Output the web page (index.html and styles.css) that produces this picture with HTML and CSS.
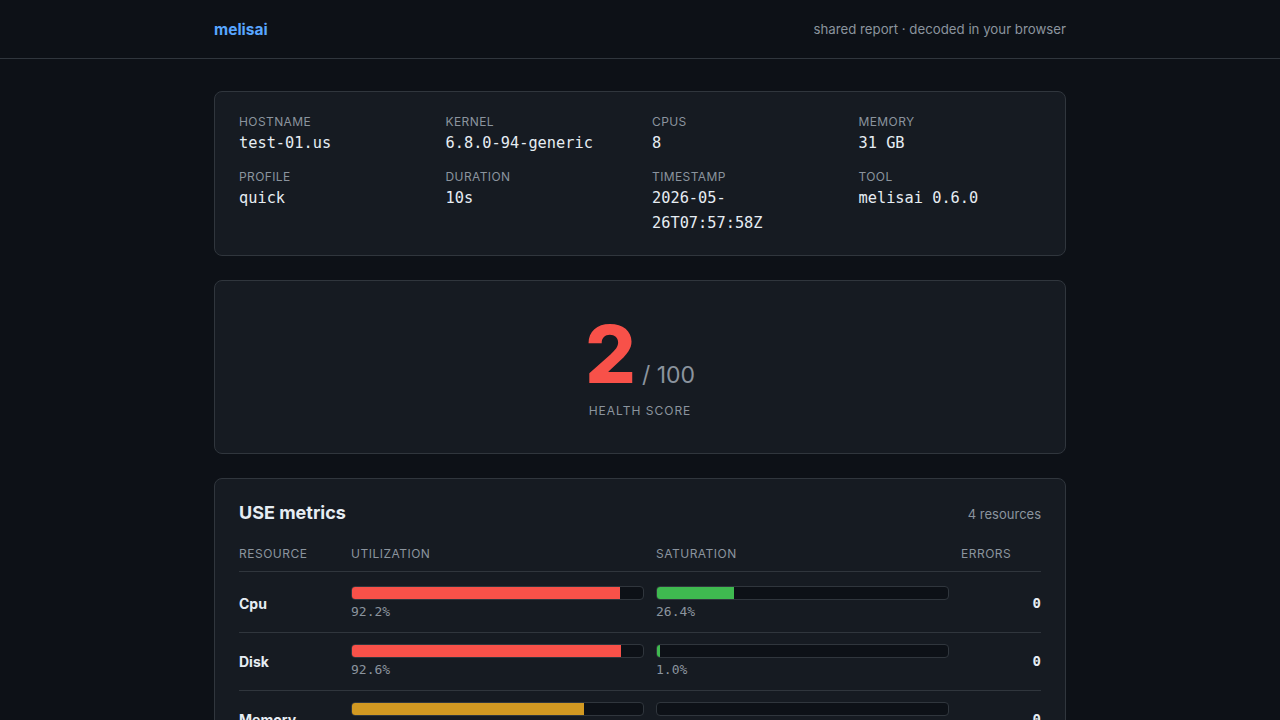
FILE: index.html
```html
<!DOCTYPE html>
<html lang="en">
<head>
    <meta charset="UTF-8">
    <meta name="viewport" content="width=device-width, initial-scale=1.0">
    <title>melisai - shared report</title>
    <link rel="stylesheet" href="styles.css">
</head>
<body>
    <header class="topbar">
        <div class="wrap topbar-inner">
            <span class="brand">melisai</span>
            <span class="topbar-note">shared report · decoded in your browser</span>
        </div>
    </header>

    <main class="wrap content">
        <section class="card meta">
            <div class="meta-item">
                <div class="meta-label">Hostname</div>
                <div class="meta-value">test-01.us</div>
            </div>
            <div class="meta-item">
                <div class="meta-label">Kernel</div>
                <div class="meta-value">6.8.0-94-generic</div>
            </div>
            <div class="meta-item">
                <div class="meta-label">CPUs</div>
                <div class="meta-value">8</div>
            </div>
            <div class="meta-item">
                <div class="meta-label">Memory</div>
                <div class="meta-value">31 GB</div>
            </div>
            <div class="meta-item">
                <div class="meta-label">Profile</div>
                <div class="meta-value">quick</div>
            </div>
            <div class="meta-item">
                <div class="meta-label">Duration</div>
                <div class="meta-value">10s</div>
            </div>
            <div class="meta-item">
                <div class="meta-label">Timestamp</div>
                <div class="meta-value">2026-05-26T07:57:58Z</div>
            </div>
            <div class="meta-item">
                <div class="meta-label">Tool</div>
                <div class="meta-value">melisai 0.6.0</div>
            </div>
        </section>

        <section class="card score">
            <div class="score-line">
                <span class="score-num bad">2</span>
                <span class="score-max">/ 100</span>
            </div>
            <div class="score-label">Health score</div>
        </section>

        <section class="card use">
            <div class="card-head">
                <h2>USE metrics</h2>
                <span class="card-sub">4 resources</span>
            </div>
            <table class="use-table">
                <thead>
                    <tr>
                        <th class="col-res">Resource</th>
                        <th>Utilization</th>
                        <th>Saturation</th>
                        <th class="col-err">Errors</th>
                    </tr>
                </thead>
                <tbody>
                    <tr>
                        <td class="res-name">Cpu</td>
                        <td>
                            <div class="bar"><div class="fill red" style="width: 92.2%"></div></div>
                            <div class="pct">92.2%</div>
                        </td>
                        <td>
                            <div class="bar"><div class="fill green" style="width: 26.4%"></div></div>
                            <div class="pct">26.4%</div>
                        </td>
                        <td class="err">0</td>
                    </tr>
                    <tr>
                        <td class="res-name">Disk</td>
                        <td>
                            <div class="bar"><div class="fill red" style="width: 92.6%"></div></div>
                            <div class="pct">92.6%</div>
                        </td>
                        <td>
                            <div class="bar"><div class="fill green" style="width: 1.0%"></div></div>
                            <div class="pct">1.0%</div>
                        </td>
                        <td class="err">0</td>
                    </tr>
                    <tr>
                        <td class="res-name">Memory</td>
                        <td>
                            <div class="bar"><div class="fill yellow" style="width: 79.8%"></div></div>
                            <div class="pct">79.8%</div>
                        </td>
                        <td>
                            <div class="bar"><div class="fill green" style="width: 0%"></div></div>
                            <div class="pct">0.0%</div>
                        </td>
                        <td class="err">0</td>
                    </tr>
                    <tr>
                        <td class="res-name">Network</td>
                        <td>
                            <div class="bar"><div class="fill green" style="width: 3.1%"></div></div>
                            <div class="pct">3.1%</div>
                        </td>
                        <td>
                            <div class="bar"><div class="fill green" style="width: 0%"></div></div>
                            <div class="pct">0.0%</div>
                        </td>
                        <td class="err">0</td>
                    </tr>
                </tbody>
            </table>
        </section>
    </main>
</body>
</html>
```

FILE: styles.css
```css
body {
    margin: 0;
    background: #0d1117;
    color: #e6edf3;
    font-family: Inter, "Noto Sans", sans-serif;
    font-size: 14px;
}

.wrap {
    max-width: 852px;
    margin: 0 auto;
}

.topbar {
    border-bottom: 1px solid #30363d;
}

.topbar-inner {
    height: 58px;
    display: flex;
    align-items: center;
    justify-content: space-between;
}

.brand {
    color: #58a6ff;
    font-weight: 700;
    font-size: 15.5px;
}

.topbar-note {
    color: #8b949e;
    font-size: 13.25px;
}

.content {
    padding: 32px 0;
    display: flex;
    flex-direction: column;
    gap: 24px;
}

.card {
    background: #161b22;
    border: 1px solid #30363d;
    border-radius: 8px;
    padding: 20px 24px;
}

/* host info */
.meta {
    display: grid;
    grid-template-columns: repeat(4, 1fr);
    column-gap: 24px;
    row-gap: 12px;
    padding-top: 21px;
    padding-bottom: 19px;
}

.meta-label {
    color: #8b949e;
    font-size: 12px;
    text-transform: uppercase;
    letter-spacing: 0.4px;
    line-height: 18px;
}

.meta-value {
    font-family: "DejaVu Sans Mono", monospace;
    font-size: 15.3px;
    line-height: 25px;
}

/* health score */
.score {
    padding: 25px 24px 35px;
    text-align: center;
}

.score-line {
    display: flex;
    justify-content: center;
    align-items: baseline;
    gap: 6px;
}

.score-num {
    font-size: 80px;
    font-weight: 800;
    line-height: 96px;
}

.score-num.bad {
    color: #f85149;
}

.score-max {
    color: #8b949e;
    font-size: 23px;
}

.score-label {
    color: #8b949e;
    font-size: 12px;
    text-transform: uppercase;
    letter-spacing: 1px;
    margin-top: 1px;
}

/* USE metrics */
.use {
    padding-top: 23px;
}

.card-head {
    display: flex;
    justify-content: space-between;
    align-items: baseline;
    margin-bottom: 15px;
}

.card-head h2 {
    margin: 0;
    font-size: 18px;
    font-weight: 700;
}

.card-sub {
    color: #8b949e;
    font-size: 13px;
}

.use-table {
    width: 100%;
    border-collapse: collapse;
    table-layout: fixed;
}

.use-table th {
    color: #8b949e;
    font-size: 12px;
    font-weight: 400;
    text-transform: uppercase;
    letter-spacing: 0.5px;
    text-align: left;
    padding: 8px 12px 10px 0;
    border-bottom: 1px solid #30363d;
}

.use-table th.col-res {
    width: 100px;
}

.use-table th.col-err {
    width: 80px;
    padding-right: 0;
}

.use-table td {
    padding: 14px 12px 12px 0;
    border-bottom: 1px solid #30363d;
    vertical-align: middle;
}

.use-table tbody tr + tr td {
    padding-top: 11px;
    padding-bottom: 12px;
}

.res-name {
    font-weight: 700;
    font-size: 14px;
}

.bar {
    height: 12px;
    background: #0d1117;
    border: 1px solid #30363d;
    border-radius: 4px;
    overflow: hidden;
}

.fill {
    height: 100%;
}

.fill.red {
    background: #f85149;
}

.fill.green {
    background: #3fb950;
}

.fill.yellow {
    background: #d29922;
}

.pct {
    color: #8b949e;
    font-family: "DejaVu Sans Mono", monospace;
    font-size: 13px;
    line-height: 16px;
    margin-top: 4px;
}

.use-table td.err {
    text-align: right;
    padding-right: 0;
    font-family: "DejaVu Sans Mono", monospace;
    font-weight: 700;
    font-size: 14px;
}
```
